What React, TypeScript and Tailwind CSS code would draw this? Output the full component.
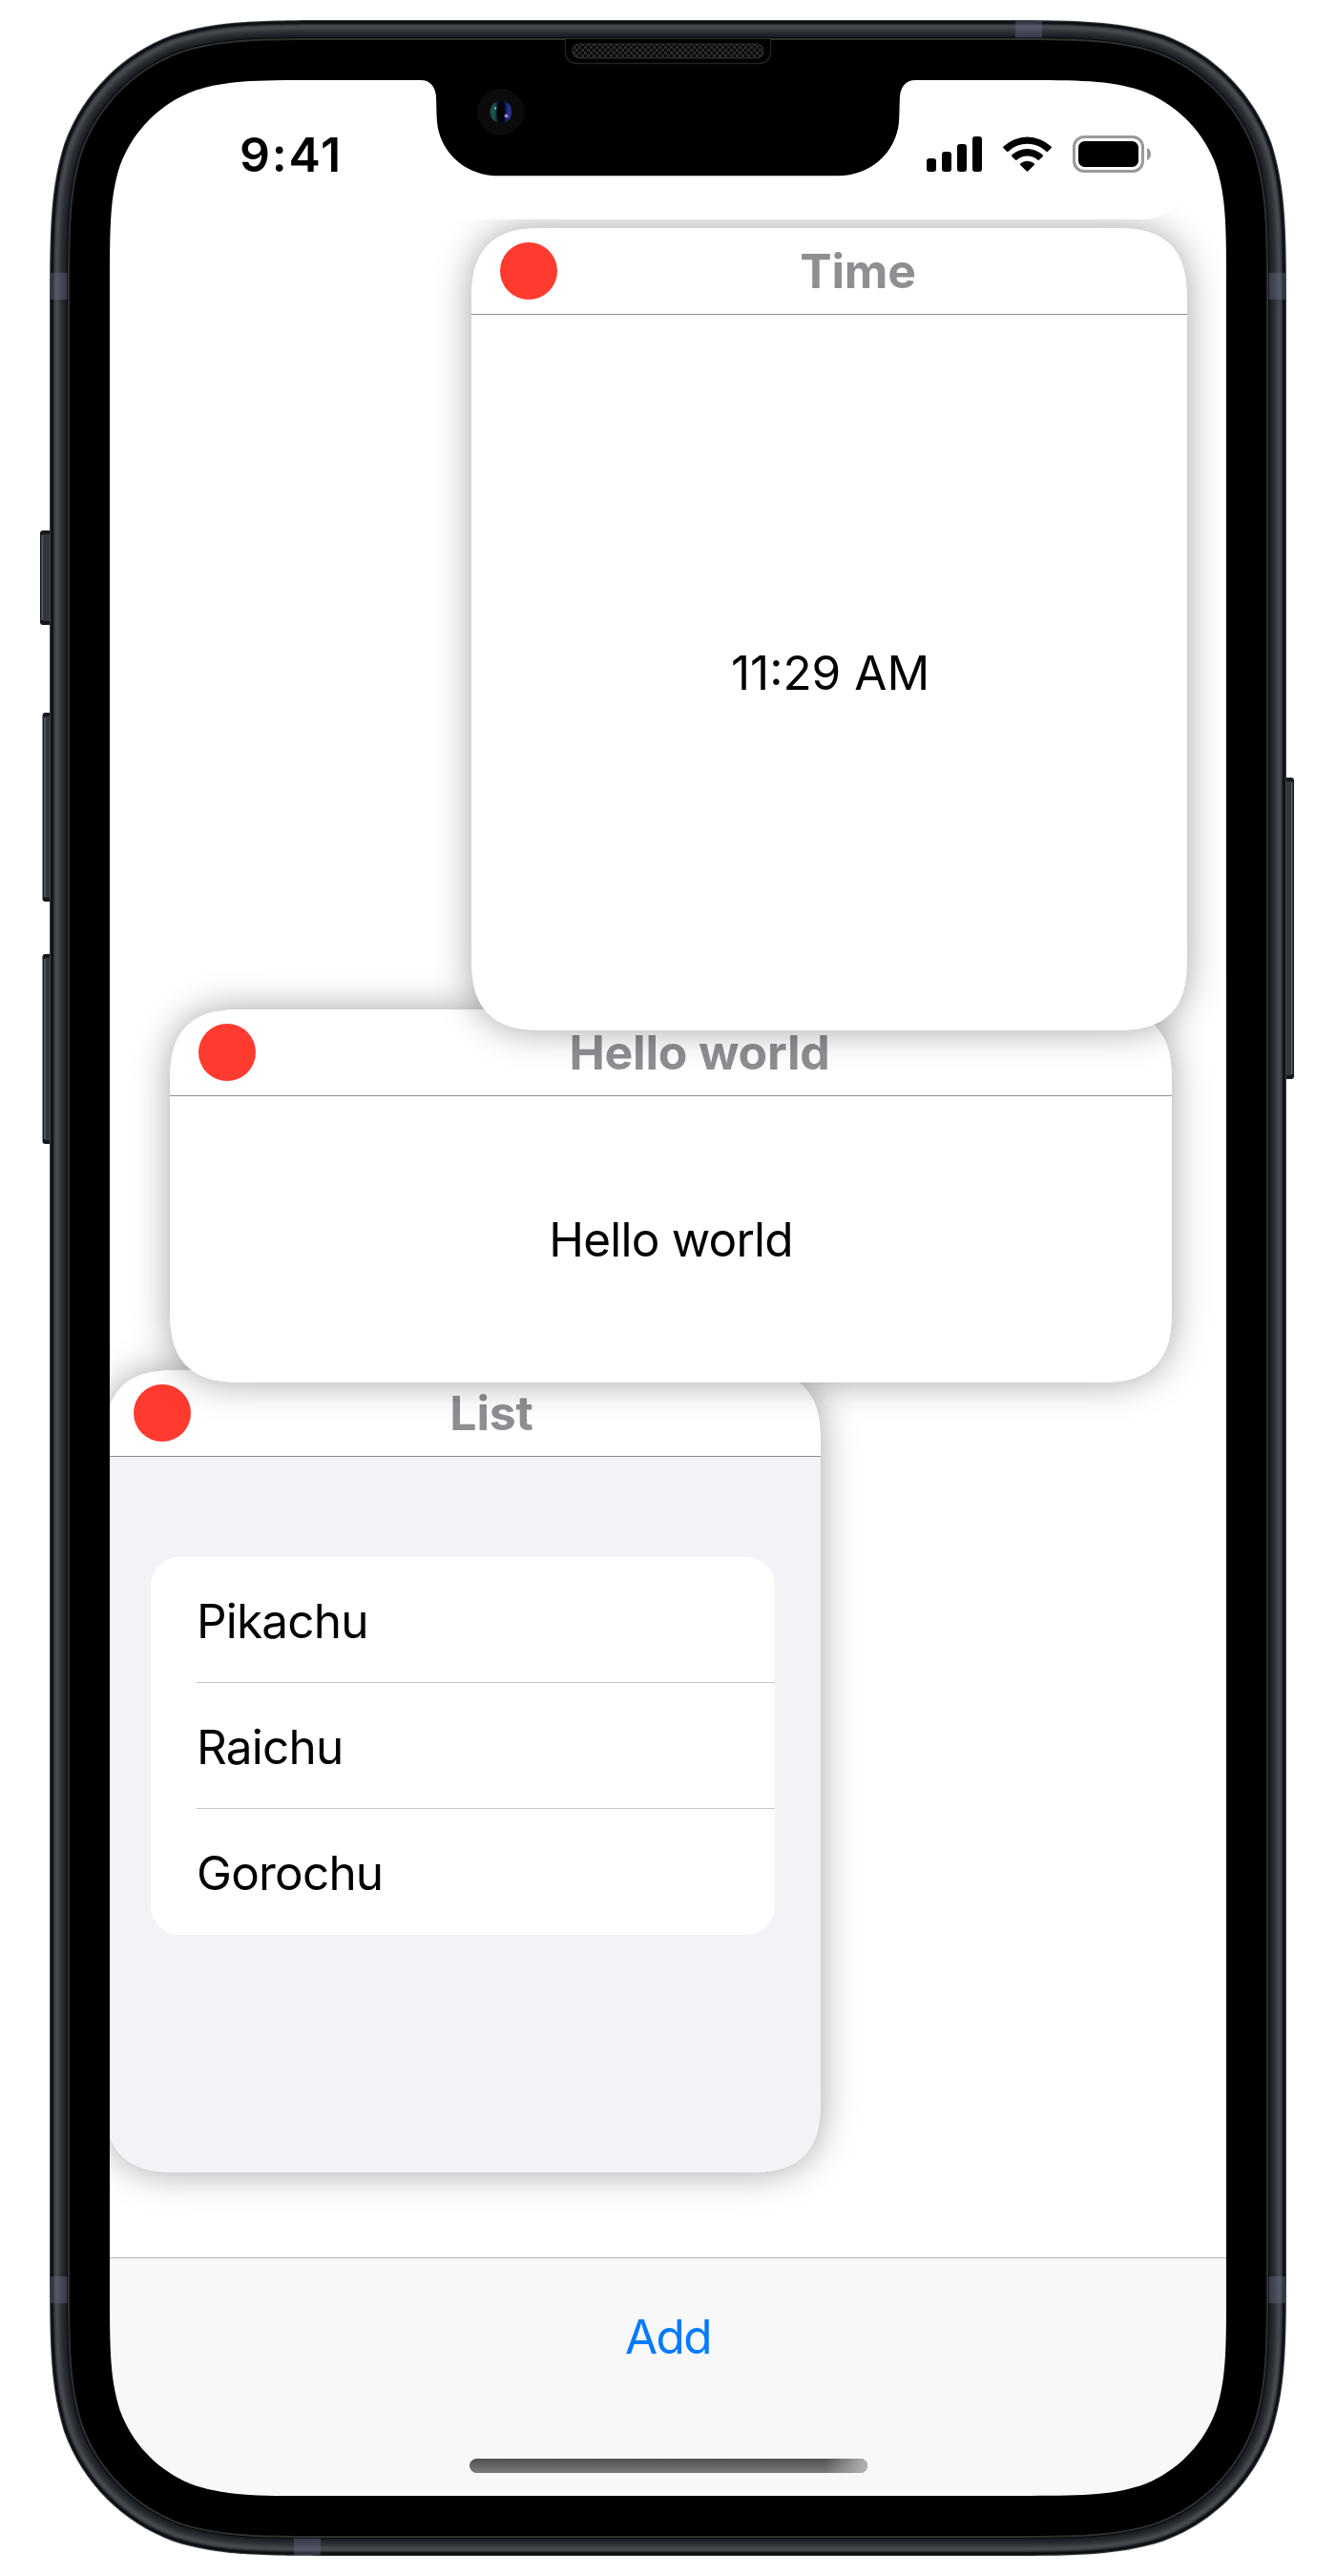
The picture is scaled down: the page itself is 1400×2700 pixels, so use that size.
import React from "react";

const FRAME = { x: 52, y: 21, w: 1296, h: 2658, r: 205 };

/* Rounded rectangle with continuous (smoothed) corners. */
function smoothRect(x: number, y: number, w: number, h: number, r: number) {
  const a = 1.52866 * r, b = 1.08849 * r, c = 0.86841 * r, d = 0.63149 * r;
  const e = 0.07491 * r, f = 0.37282 * r, g = 0.16906 * r;
  const R = x + w, B = y + h;
  return [
    `M${x + a} ${y}L${R - a} ${y}`,
    `C${R - b} ${y} ${R - c} ${y} ${R - d} ${y + e}`,
    `C${R - f} ${y + g} ${R - g} ${y + f} ${R - e} ${y + d}`,
    `C${R} ${y + c} ${R} ${y + b} ${R} ${y + a}`,
    `L${R} ${B - a}`,
    `C${R} ${B - b} ${R} ${B - c} ${R - e} ${B - d}`,
    `C${R - g} ${B - f} ${R - f} ${B - g} ${R - d} ${B - e}`,
    `C${R - c} ${B} ${R - b} ${B} ${R - a} ${B}`,
    `L${x + a} ${B}`,
    `C${x + b} ${B} ${x + c} ${B} ${x + d} ${B - e}`,
    `C${x + f} ${B - g} ${x + g} ${B - f} ${x + e} ${B - d}`,
    `C${x} ${B - c} ${x} ${B - b} ${x} ${B - a}`,
    `L${x} ${y + a}`,
    `C${x} ${y + b} ${x} ${y + c} ${x + e} ${y + d}`,
    `C${x + g} ${y + f} ${x + f} ${y + g} ${x + d} ${y + e}`,
    `C${x + c} ${y} ${x + b} ${y} ${x + a} ${y}Z`,
  ].join("");
}

const SCREEN = smoothRect(115, 84, 1170, 2532, 142);

/* Metal rim, one colour per pixel of inset from the outer edge. */
const RIM = [
  "#3c4045", "#0f1318", "#0b0e13", "#15191e", "#2b2f34", "#3c4045", "#45494d", "#474a4e", "#44474b",
  "#3e4246", "#373b40", "#31353a", "#2c3035", "#282c31", "#24282e", "#20252a", "#1d2127", "#191d23",
  "#07090b", "#333333", "#2e2e2e", "#000000",
];

function SideButton({ x, y, w, h, flip = false }: { x: number; y: number; w: number; h: number; flip?: boolean }) {
  return (
    <g>
      <rect x={x} y={y} width={w + 3} height={h} rx="3" fill="#14181d" />
      <rect x={flip ? x + 3 : x + 2} y={y + 4} width={w - 2} height={h - 8} rx="2" fill="#32373d" />
      <rect x={flip ? x + w : x + 1.5} y={y + 5} width="1.5" height={h - 10} fill="#5b6167" />
    </g>
  );
}

function DeviceFrame() {
  return (
    <svg className="pointer-events-none absolute inset-0 z-20" width="1400" height="2700" viewBox="0 0 1400 2700">
      <defs>
        <mask id="bezel">
          <rect width="1400" height="2700" fill="#fff" />
          <path d={SCREEN} fill="#000" />
        </mask>
        <pattern id="mesh" width="6" height="6" patternUnits="userSpaceOnUse">
          <rect width="6" height="6" fill="#0a0a0a" />
          <rect width="3" height="3" fill="#2b2b2b" />
          <rect x="3" y="3" width="3" height="3" fill="#2b2b2b" />
        </pattern>
        <linearGradient id="lens" x1="0" x2="1" y1="0" y2="0">
          <stop offset="0" stopColor="#1d4a45" />
          <stop offset="0.22" stopColor="#185250" />
          <stop offset="0.4" stopColor="#020408" />
          <stop offset="0.6" stopColor="#04061c" />
          <stop offset="0.85" stopColor="#2438a0" />
          <stop offset="1" stopColor="#1c1c3c" />
        </linearGradient>
      </defs>
      <g mask="url(#bezel)">
        <SideButton x={42} y={556} w={11} h={99} />
        <SideButton x={44.5} y={747} w={9} h={198} />
        <SideButton x={44.5} y={1000} w={9} h={199} />
        <SideButton x={1344} y={815} w={9} h={316} flip />
        {RIM.map((color, i) => (
          <path
            key={i}
            d={smoothRect(FRAME.x + i, FRAME.y + i, FRAME.w - 2 * i, FRAME.h - 2 * i, FRAME.r - i)}
            fill={color}
          />
        ))}
        <g fill="#6a6c86" fillOpacity="0.4">
          <rect x="52.5" y="286" width="18" height="28" />
          <rect x="1329.5" y="286" width="18" height="28" />
          <rect x="52.5" y="2386" width="18" height="28" />
          <rect x="1329.5" y="2386" width="18" height="28" />
          <rect x="1064" y="21.5" width="28" height="18" />
          <rect x="308" y="2660.5" width="28" height="18" />
        </g>
      </g>
      <path
        d="M438 82V84H441C450 84 456 90 457 101C457.400 109 457.200 118 458 128C461 160 488 184.300 522 184.300H878C912 184.300 939 160 942 128C942.800 118 942.400 109 943 101C944 90 950 84 959 84H962V82Z"
        fill="#000"
      />
      <path d="M592.500 41V53Q592.500 66.500 606 66.500H794Q807.500 66.500 807.500 53V41" fill="#000" stroke="#222222" strokeWidth="1.500" />
      <rect x="600" y="46" width="200" height="15" rx="7.500" fill="url(#mesh)" stroke="#303030" strokeWidth="1.200" />
      <circle cx="524.700" cy="117.300" r="24.500" fill="#0b0b0c" />
      <circle cx="525" cy="117.300" r="12" fill="url(#lens)" stroke="#101014" />
      <ellipse cx="525" cy="117.300" rx="4.500" ry="11" fill="#010206" />
      <circle cx="519" cy="113.500" r="1.300" fill="#6fb4c8" />
      <circle cx="530.500" cy="121.500" r="2" fill="#9c86c8" />
    </svg>
  );
}

function StatusBar() {
  return (
    <div className="absolute left-[45px] top-4 z-10 flex h-[130px] w-[1082px] items-center justify-between rounded-b-[44px] bg-white pl-[91px] pr-[35px]">
      <span className="-mt-[6px] text-[50px] font-semibold leading-none tracking-[1.8px]">9:41</span>
      <svg className="-mt-[6px]" width="237" height="40" viewBox="970 142 237 40">
        <rect x="971" y="166" width="10" height="14" rx="3" />
        <rect x="987" y="159" width="10" height="21" rx="3" />
        <rect x="1003" y="151" width="10" height="29" rx="3" />
        <rect x="1019" y="143" width="10" height="37" rx="3" />
        <path d="M1051.500 153.500A36.500 36.500 0 0 1 1101.500 153.500Q1102.300 154.300 1101.500 155.200L1098 158.700Q1097.200 159.400 1096.400 158.700A29 29 0 0 0 1056.600 158.700Q1055.800 159.400 1055 158.700L1051.500 155.200Q1050.700 154.300 1051.500 153.500Z" />
        <path d="M1060.300 162.300A24 24 0 0 1 1092.700 162.300Q1093.500 163.200 1092.700 164L1089 167.600Q1088.200 168.300 1087.300 167.600A16.500 16.500 0 0 0 1065.700 167.600Q1064.800 168.300 1064 167.600L1060.300 164Q1059.500 163.200 1060.300 162.300Z" />
        <path d="M1069.300 171.300A11.500 11.500 0 0 1 1083.700 171.300Q1084.500 172.200 1083.700 173L1077.400 179.300Q1076.500 180.100 1075.600 179.300L1069.300 173Q1068.500 172.200 1069.300 171.300Z" />
        <rect x="1125.500" y="143.500" width="72" height="36" rx="10.500" fill="none" stroke="#9a9a9a" strokeWidth="3" />
        <rect x="1130" y="148" width="63" height="27" rx="6.500" />
        <path d="M1202 155C1207.300 157 1207.300 166 1202 168Z" fill="#9a9a9a" />
      </svg>
    </div>
  );
}

function Window({ title, place, children }: { title: string; place: string; children: React.ReactNode }) {
  return (
    <section
      className={`absolute flex flex-col rounded-[64px] shadow-[0_0_38px_rgba(0,0,0,0.36)] supports-[corner-shape:squircle]:rounded-[80px] [corner-shape:superellipse(1.49)] ${place}`}
    >
      <div className="flex grow flex-col overflow-hidden rounded-[inherit] bg-white [corner-shape:inherit]">
        <header className="flex h-[91px] shrink-0 items-center border-b border-[#8e8e93] px-[30px]">
          <span className="size-[60px] rounded-full bg-[#ff3b30]" />
          <h2 className="grow text-center text-[50px] font-bold leading-none tracking-[-0.2px] text-[#8e8e93]">{title}</h2>
        </header>
        {children}
      </div>
    </section>
  );
}

const LIST = ["Pikachu", "Raichu", "Gorochu"];

export default function App() {
  return (
    <main className="relative h-[2700px] w-[1400px] overflow-hidden bg-white pl-[115px] pt-[84px] font-[Inter,sans-serif] text-black">
      <div className="relative flex h-[2532px] w-[1170px] flex-col overflow-hidden rounded-[120px] bg-white">
        <StatusBar />
        <div className="relative grow">
          <Window title="List" place="left-[-5px] top-[1352px] h-[841px] w-[750px]">
            <div className="grow bg-[#f2f2f7] px-12 pt-[105px]">
              <ul className="rounded-[30px] bg-white pl-12">
                {LIST.map((name) => (
                  <li
                    key={name}
                    className="flex h-[132px] items-center border-b border-[#c6c6c8] pt-[5px] text-[49.5px] leading-none tracking-[-0.8px] last:border-b-0 last:pt-[4px]"
                  >
                    {name}
                  </li>
                ))}
              </ul>
            </div>
          </Window>
          <Window title="Hello world" place="left-[63px] top-[974px] h-[391px] w-[1050px]">
            <p className="flex grow items-center justify-center pt-[2px] text-[49.5px] leading-none tracking-[-0.8px]">Hello world</p>
          </Window>
          <Window title="Time" place="left-[379px] top-[155px] h-[841px] w-[750px]">
            <p className="flex grow items-center justify-center pl-[2px] pt-[2px] text-[49.5px] leading-none">11:29 AM</p>
          </Window>
        </div>
        <footer className="flex h-[250px] shrink-0 flex-col items-center justify-between border-t border-[#b2b2b2] bg-[#f8f8f8] pb-[24px] pt-[58px]">
          <button className="text-[49.5px] leading-none tracking-[-1.6px] text-[#007aff]">Add</button>
          <span className="flex h-[15px] w-[417px] justify-end overflow-hidden rounded-full bg-linear-to-b from-[#505050] to-[#7c7c7c]">
            <span className="h-full w-[44px] bg-linear-to-r from-[#b4b4b4]/0 to-[#b4b4b4]" />
          </span>
        </footer>
      </div>
      <DeviceFrame />
    </main>
  );
}
